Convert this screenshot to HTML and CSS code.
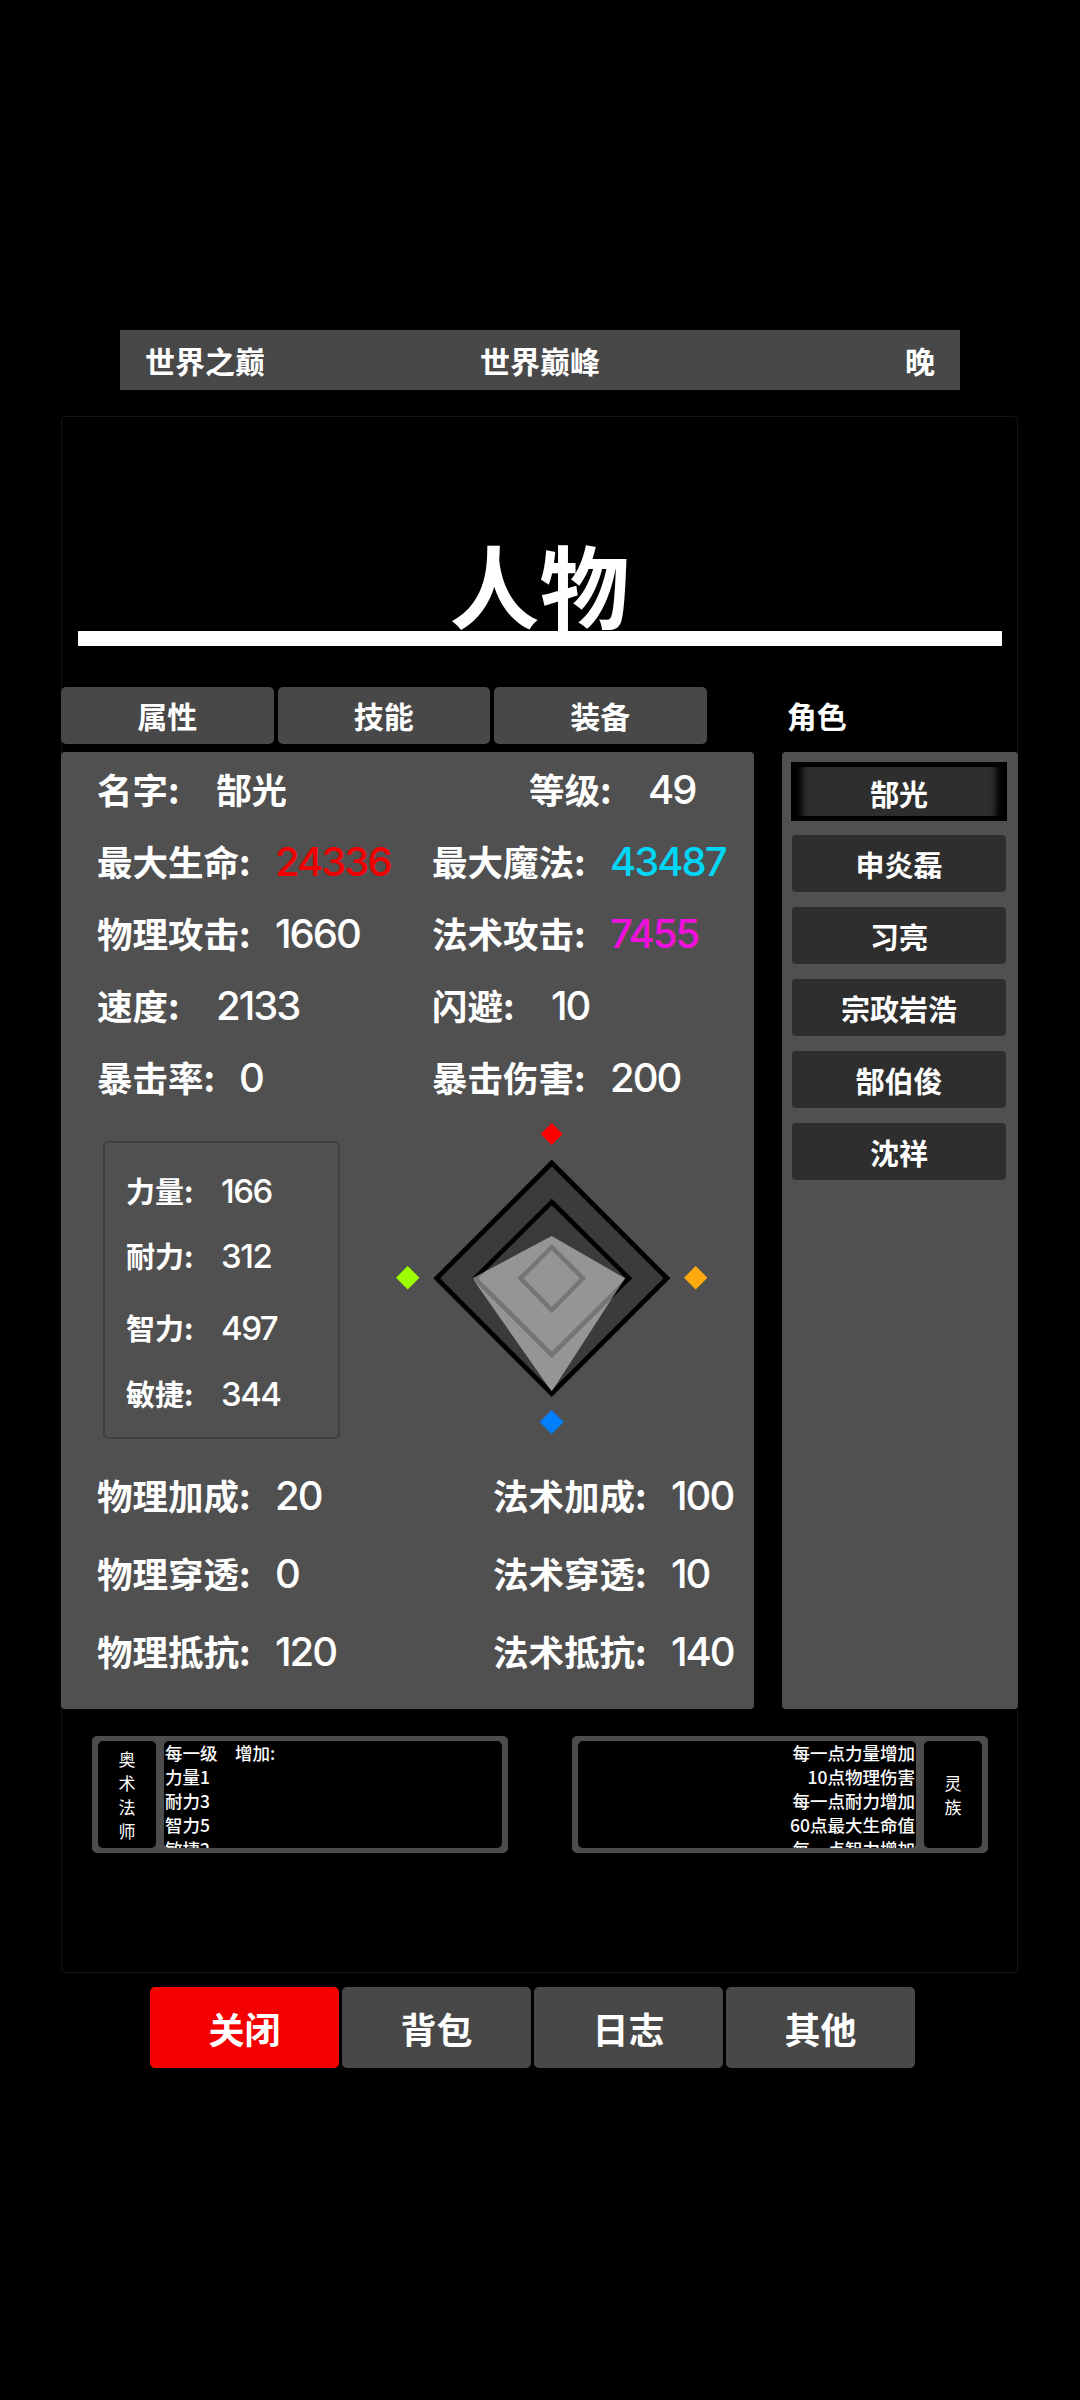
FILE: index.html
```html
<!DOCTYPE html>
<html lang="zh-CN">
<head>
<meta charset="utf-8">
<title>人物</title>
<link rel="stylesheet" href="styles.css">
</head>
<body>
<header class="topbar">
  <span class="top-left">世界之巅</span>
  <span class="top-mid">世界巅峰</span>
  <span class="top-right">晚</span>
</header>

<main class="sheet">
  <div class="title-wrap"><h1 class="title">人物</h1></div>
  <div class="rule"></div>

  <nav class="tabs">
    <div class="tab">属性</div>
    <div class="tab">技能</div>
    <div class="tab">装备</div>
    <div class="tab tab-plain">角色</div>
  </nav>

  <div class="columns">
    <section class="stats">
      <div class="row-head">
        <div class="stat"><span class="lab w2">名字:</span><span class="name-val">郜光</span></div>
        <div class="stat"><span class="lab w2">等级:</span><span class="val">49</span></div>
      </div>
      <div class="stat-grid">
        <div class="stat"><span class="lab w4">最大生命:</span><span class="val red">24336</span></div>
        <div class="stat"><span class="lab w4">最大魔法:</span><span class="val cyan">43487</span></div>
        <div class="stat"><span class="lab w4">物理攻击:</span><span class="val">1660</span></div>
        <div class="stat"><span class="lab w4">法术攻击:</span><span class="val magenta">7455</span></div>
        <div class="stat"><span class="lab w2">速度:</span><span class="val">2133</span></div>
        <div class="stat"><span class="lab w2">闪避:</span><span class="val">10</span></div>
        <div class="stat"><span class="lab w3">暴击率:</span><span class="val">0</span></div>
        <div class="stat"><span class="lab w4">暴击伤害:</span><span class="val">200</span></div>
      </div>

      <div class="middle">
        <div class="attrs">
          <div class="attr"><span class="attr-lab">力量:</span><span class="attr-val">166</span></div>
          <div class="attr"><span class="attr-lab">耐力:</span><span class="attr-val">312</span></div>
          <div class="attr attr-low"><span class="attr-lab">智力:</span><span class="attr-val">497</span></div>
          <div class="attr"><span class="attr-lab">敏捷:</span><span class="attr-val">344</span></div>
        </div>
        <svg class="radar" viewBox="390 1112 320 343" aria-hidden="true">
          <polygon points="551.7,1163 667,1278.3 551.7,1393.6 436.7,1278.3" fill="#3b3b3b" stroke="#000" stroke-width="4.8"/>
          <polygon points="551.7,1202 629,1278.3 551.7,1355 475,1278.3" fill="#3b3b3b" stroke="#000" stroke-width="4.6"/>
          <polygon points="551.7,1247 583,1278.3 551.7,1310 520.5,1278.3" fill="none" stroke="#000" stroke-width="4.4"/>
          <polygon points="551.7,1236 625,1278.3 551.7,1391.6 472.4,1278.3" fill="#fff" fill-opacity=".46"/>
          <polygon points="551.7,1123 562.7,1134 551.7,1145 540.7,1134" fill="#ff0000"/>
          <polygon points="695.7,1266 707.4,1277.7 695.7,1289.4 684,1277.7" fill="#ffab10"/>
          <polygon points="551.7,1410 563.7,1422 551.7,1434 539.7,1422" fill="#007fff"/>
          <polygon points="407.7,1266 419.4,1277.7 407.7,1289.4 396,1277.7" fill="#9dff00"/>
        </svg>
      </div>

      <div class="bonus-grid">
        <div class="stat"><span class="lab w4">物理加成:</span><span class="val">20</span></div>
        <div class="stat"><span class="lab w4">法术加成:</span><span class="val">100</span></div>
        <div class="stat"><span class="lab w4">物理穿透:</span><span class="val">0</span></div>
        <div class="stat"><span class="lab w4">法术穿透:</span><span class="val">10</span></div>
        <div class="stat"><span class="lab w4">物理抵抗:</span><span class="val">120</span></div>
        <div class="stat"><span class="lab w4">法术抵抗:</span><span class="val">140</span></div>
      </div>
    </section>

    <aside class="roster">
      <div class="hero hero-active">郜光</div>
      <div class="hero">申炎磊</div>
      <div class="hero">习亮</div>
      <div class="hero">宗政岩浩</div>
      <div class="hero">郜伯俊</div>
      <div class="hero">沈祥</div>
    </aside>
  </div>

  <div class="traits">
    <div class="trait">
      <div class="trait-name"><span>奥</span><span>术</span><span>法</span><span>师</span></div>
      <div class="trait-text">
        <div>每一级&emsp;增加:</div>
        <div>力量1</div>
        <div>耐力3</div>
        <div>智力5</div>
        <div>敏捷2</div>
      </div>
    </div>
    <div class="trait">
      <div class="trait-text trait-right">
        <div>每一点力量增加</div>
        <div>10点物理伤害</div>
        <div>每一点耐力增加</div>
        <div>60点最大生命值</div>
        <div>每一点智力增加</div>
      </div>
      <div class="trait-name"><span>灵</span><span>族</span></div>
    </div>
  </div>
</main>

<footer class="actions">
  <button class="action action-close">关闭</button>
  <button class="action">背包</button>
  <button class="action">日志</button>
  <button class="action">其他</button>
</footer>
</body>
</html>
```
FILE: styles.css
```css
* { box-sizing: border-box; }
html, body { margin: 0; padding: 0; background: #000; }
body {
  width: 1080px;
  height: 2400px;
  padding-top: 330px;
  color: #fff;
  font-family: "Noto Sans CJK SC", "Noto Sans", sans-serif;
  overflow: hidden;
}

.topbar {
  display: grid;
  grid-template-columns: 1fr auto 1fr;
  align-items: center;
  width: 840px;
  height: 60px;
  margin-left: 120px;
  padding: 0 25px;
  background: #484848;
  font-size: 30px;
  font-weight: 700;
  line-height: 60px;
}
.top-right { text-align: right; }

.sheet {
  width: 957px;
  height: 1557px;
  margin: 26px 0 0 61px;
  border: 1px solid #141414;
  border-radius: 4px;
}

.title-wrap {
  display: flex;
  justify-content: center;
  align-items: flex-end;
  height: 214px;
}
.title {
  margin: 0 0 -7px;
  font-size: 90px;
  font-weight: 700;
  line-height: 110px;
}
.rule {
  height: 15px;
  margin: 0 15px 0 16px;
  background: #fff;
}

.tabs {
  display: flex;
  gap: 4px;
  margin: 41px 0 0 -1px;
}
.tab {
  width: 212.5px;
  height: 57px;
  background: #484848;
  border-radius: 5px;
  font-size: 30px;
  font-weight: 700;
  line-height: 57px;
  text-align: center;
}
.tab-plain { background: none; }

.columns {
  display: flex;
  gap: 28px;
  width: 957px;
  margin: 8px 0 0 -1px;
}
.stats {
  flex: 0 0 693px;
  height: 957px;
  padding: 0 0 0 36px;
  background: #505050;
  border-radius: 4px;
}
.row-head {
  display: grid;
  grid-template-columns: 432px 1fr;
  height: 72px;
}
.stat-grid {
  display: grid;
  grid-template-columns: 335px 1fr;
  grid-auto-rows: 72px;
}
.bonus-grid {
  display: grid;
  grid-template-columns: 396px 1fr;
  grid-auto-rows: 78px;
}
.stat {
  display: flex;
  align-items: center;
  height: 100%;
}
.lab {
  font-size: 35.5px;
  font-weight: 700;
  white-space: nowrap;
}
.w2 { width: 119px; }
.w3 { width: 142px; }
.w4 { width: 178px; }
.val {
  padding-top: 4px;
  font-family: "Inter", sans-serif;
  font-size: 40px;
  font-weight: 500;
  letter-spacing: -2px;
  line-height: 1;
}
.name-val {
  font-size: 35.5px;
  font-weight: 700;
}
.red { color: #f00000; }
.cyan { color: #00d6f5; }
.magenta { color: #f010dc; }

.middle {
  display: flex;
  align-items: flex-start;
  height: 343px;
  margin-left: -36px;
}
.attrs {
  width: 237px;
  height: 298px;
  margin: 29px 0 0 42px;
  padding: 14px 0 0 21px;
  border: 2px solid #404040;
  border-radius: 5px;
}
.attr {
  display: flex;
  align-items: center;
  height: 65px;
}
.attr-low { margin: 7px 0 1px; }
.attr-lab {
  width: 95px;
  font-size: 29px;
  font-weight: 700;
}
.attr-val {
  padding-top: 3px;
  font-family: "Inter", sans-serif;
  font-size: 33px;
  font-weight: 500;
  letter-spacing: -1.5px;
  line-height: 1;
}
.radar {
  display: block;
  width: 320px;
  height: 343px;
  margin-left: 50px;
}

.roster {
  display: flex;
  flex-direction: column;
  gap: 15px;
  flex: 0 0 236px;
  height: 957px;
  padding: 11px 12px 0 10px;
  background: #505050;
  border-radius: 4px;
}
.hero {
  height: 57px;
  background: #2e2e2e;
  border-radius: 4px;
  font-size: 29px;
  font-weight: 700;
  line-height: 59px;
  text-align: center;
}
.hero-active {
  border-radius: 0;
  line-height: 61px;
  box-shadow:
    0 0 0 1px #000,
    inset 0 4px 0 #000,
    inset 0 -4px 0 #000,
    inset 13px 0 6px -3px #000,
    inset -13px 0 6px -3px #000;
}

.traits {
  display: flex;
  justify-content: space-between;
  margin: 27px 29px 0 30px;
}
.trait {
  display: flex;
  gap: 8px;
  width: 416px;
  height: 117px;
  padding: 5px 6px;
  background: #4d4d4d;
  border-radius: 5px;
}
.trait-name {
  display: flex;
  flex-direction: column;
  justify-content: center;
  flex: 0 0 58px;
  background: #000;
  border-radius: 5px;
  font-size: 17px;
  line-height: 24px;
  text-align: center;
}
.trait-text {
  flex: 1;
  overflow: hidden;
  background: #000;
  border-radius: 5px;
  font-size: 17.5px;
  font-weight: 500;
  line-height: 24px;
  padding-left: 1px;
  white-space: nowrap;
}
.trait-right {
  padding: 0 1px 0 0;
  text-align: right;
}

.actions {
  display: flex;
  gap: 3px;
  margin: 14px 0 0 150px;
}
.action {
  width: 189px;
  height: 81px;
  padding: 0;
  border: 0;
  border-radius: 5px;
  background: #484848;
  color: #fff;
  font-family: inherit;
  font-size: 36px;
  font-weight: 700;
}
.action-close { background: #f50000; }
```
